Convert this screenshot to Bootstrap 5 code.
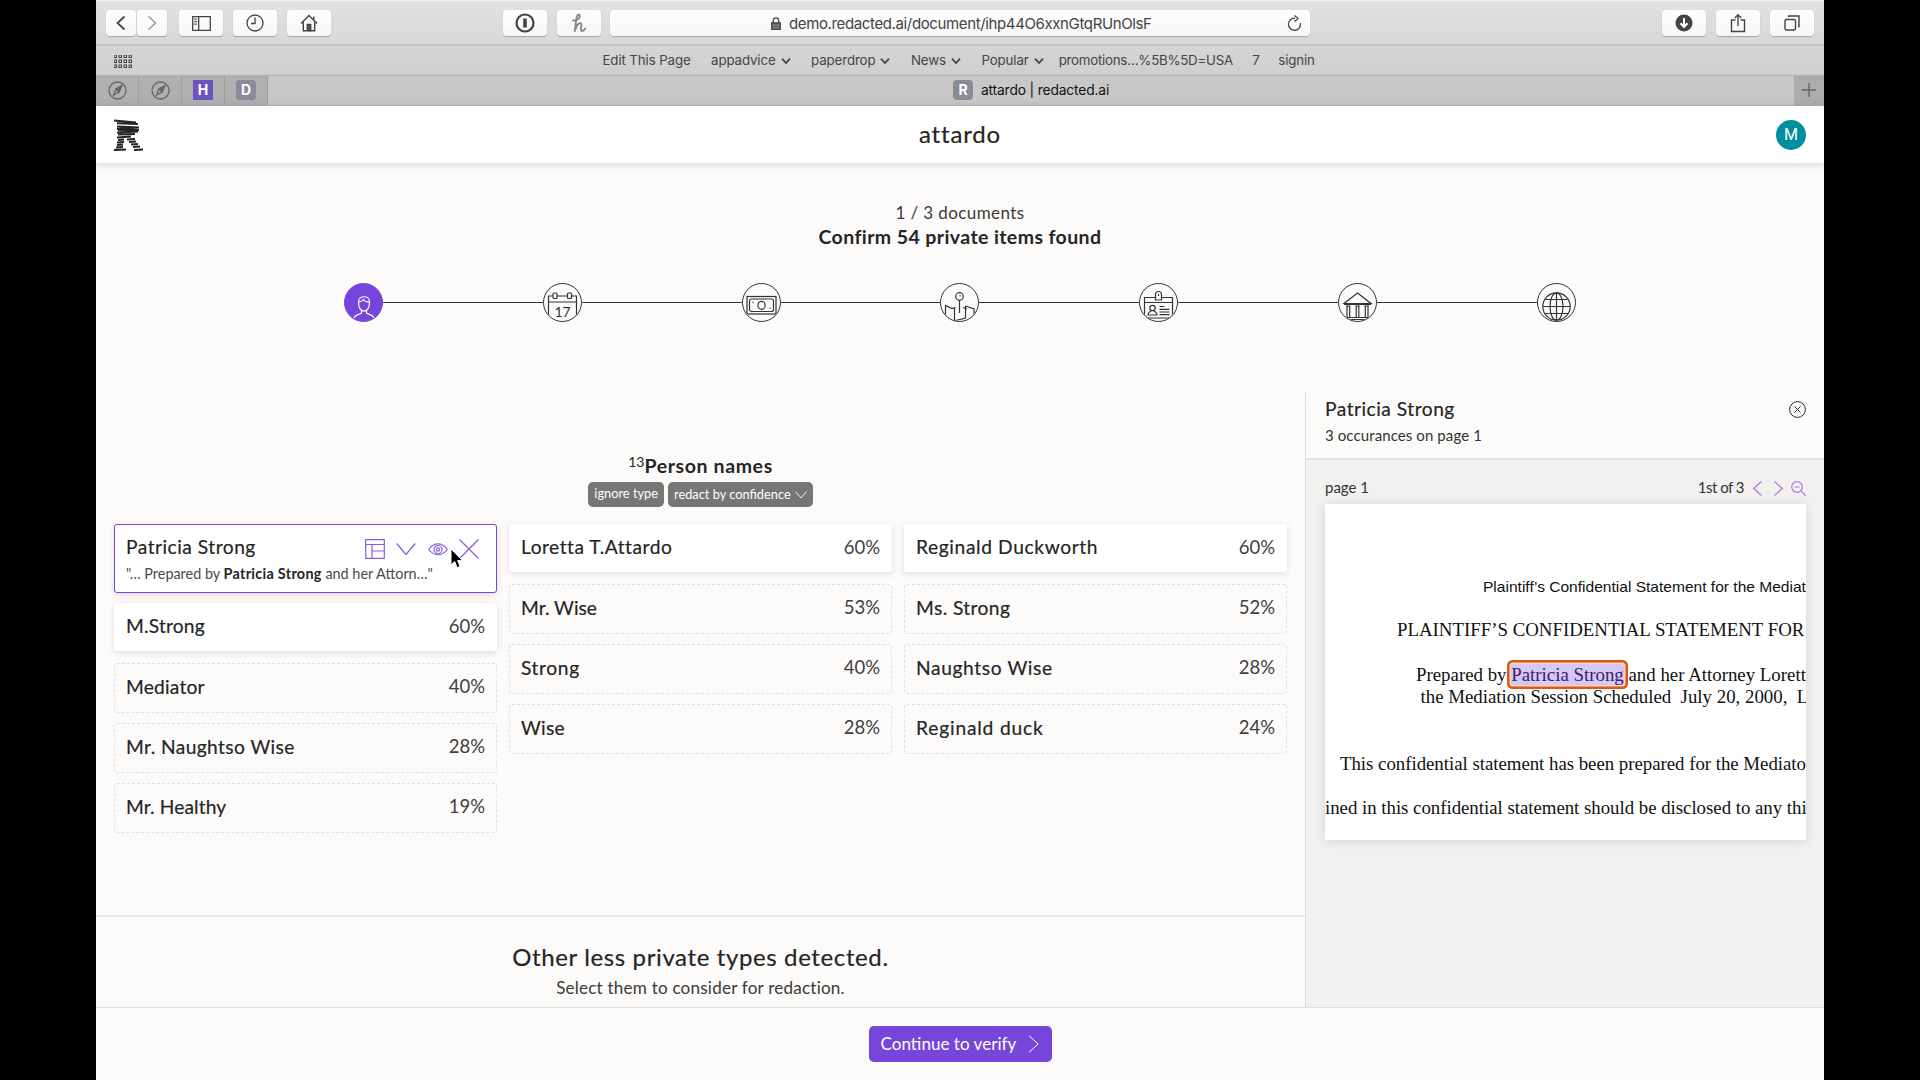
<!DOCTYPE html>
<html lang="en">
<head>
<meta charset="utf-8">
<title>attardo | redacted.ai</title>
<link rel="stylesheet" href="https://cdn.jsdelivr.net/npm/bootstrap@5.3.0/dist/css/bootstrap.min.css">
<style>
body{background:#000;overflow:hidden;font-family:Lato,"Open Sans",sans-serif;color:#252525}
svg{display:block;flex:none;fill:none;stroke:currentColor}
.t{white-space:nowrap;display:inline-block}
.k1{letter-spacing:.1px}.k2{letter-spacing:.2px}.k3{letter-spacing:.3px}.k4{letter-spacing:.4px}.k5{letter-spacing:.5px}.k6{letter-spacing:.62px}.k8{letter-spacing:.82px}
.screen{width:1728px;height:1080px;background:#fcfbf9}
.screen>*{flex:none}
/* browser chrome */
.chrome{font-family:Inter,Roboto,sans-serif;color:#454545}
.toolbar{height:46px;padding:9px 10px 0;background:linear-gradient(#e2e2e2,#d8d8d8);border-bottom:2px solid #c3c3c3;border-top:1px solid #efefef}
.tbtn{width:44px;height:26px;border-radius:4px;background:linear-gradient(#fff,#f6f6f6);box-shadow:0 1px 1px rgba(0,0,0,.25);color:#444;margin-left:10px}
.tbtn.slim{width:30px;margin-left:0}
.tbtn.fwd{margin-left:1px;color:#999}
.tbtn.gap-s{margin-left:12px}
.tbtn.gap-l{margin-left:172px}
.tbtn.pale{color:#888;margin-left:10px}
.urlbar{width:700px;margin-left:9px;padding:1px 8px 0 161px;font-size:15px;line-height:25px;letter-spacing:-.37px}
.favs{height:29.5px;padding-top:2px;background:linear-gradient(#d5d5d5,#cfcfcf);border-bottom:1.5px solid #b0b0b0;font-size:13.3px;letter-spacing:-.12px}
.favlist{margin-left:470.5px;gap:20.5px}
.drop{gap:5px}
.promo{letter-spacing:-.25px;margin:0 -1px 0 -5.5px}
.tabs{height:30.5px;background:#c8c8c8;border-bottom:1px solid #b5b5b5;font-size:13.8px;letter-spacing:-.15px;color:#111}
.pin{width:43px;background:#b0b0b0;border-right:1px solid #9d9d9d;color:#666}
.favicon{width:20px;height:20px;border-radius:4px;background:#8b8a96;color:#fff;font-weight:700;font-size:14px;line-height:20px;text-align:center}
.favicon.sq{border-radius:0;background:#6a55bd}
.newtab{width:30px;background:#acacac;color:#666}
/* app */
.apphead{height:57px;background:#fff;box-shadow:0 1px 8px rgba(0,0,0,.18);padding:0 18px;position:relative}
.apphead .t{font-size:24px;line-height:30px;padding-bottom:1px}
.avatar{width:30px;height:30px;background:#008f9e;color:#fff;font-family:Roboto,sans-serif;font-size:16px;line-height:30px}
.docs{font-size:17px;line-height:24px;color:#3a3a3a}
.confirm{font-size:19.5px;line-height:24px;font-weight:700}
.intro{height:229px;padding-top:38px}
.steps{width:1232px;margin-top:34px}
.step{width:39px;height:39px;border-radius:50%;overflow:hidden;border:1.3px solid #333;color:#333}
.step.on{background:#7645d9;border-color:#7645d9;color:#fff}
.rail{height:1.4px;background:#333}
.lower{height:615px}
.main{width:1210px;flex:none;border-right:1px solid #dcdbda}
.found{height:523px;padding:0 18px}
.ttl{font-size:19.5px;line-height:24px;font-weight:700;padding-top:62px}
.ttl sup{font-size:14px;font-weight:400;top:-.45em;line-height:0}
.pills{gap:4px;margin-top:4px}
.pill{height:25px;border-radius:5px;background:#767675;color:#fff;font-size:12.8px;line-height:23px;padding:0 6px}
.names{gap:12px;margin-top:17px}
.names>div{flex:1 1 0;min-width:0}
.item{padding:0 12px;font-size:19.2px;border-radius:3px}
.item .t,.sidehead .a,.h-other,.apphead .t{-webkit-text-stroke:.2px}
.item .pc{color:#3f3f3f;font-size:18.5px;-webkit-text-stroke:0}
.sure{height:48px;margin-bottom:12px;background:#fff;box-shadow:0 2px 7px rgba(0,0,0,.12);line-height:46px}
.maybe{height:50px;margin-bottom:10px;border:1.5px dashed #e2e1df;padding:0 11px;line-height:45px}
.picked{height:69px;margin-bottom:9.5px;background:#fff;border:1.5px solid #7645d9;box-shadow:0 2px 7px rgba(0,0,0,.12);padding:0 11px}
.picked .top{line-height:44px;height:44px}
.quote{font-size:14.4px;line-height:20px;color:#4a4a4a;margin-top:-5px}
.item .quote .t{-webkit-text-stroke:0}
.quote b{color:#252525;letter-spacing:.3px}
.acts{color:#8560dd;gap:11.5px;padding-right:6px;padding-top:4px}
.pointer{position:absolute;left:450px;top:548px}
.other{border-top:2px solid #e9e8e6;padding-top:25px}
.h-other{font-size:24px;line-height:30px}
.s-other{font-size:17.1px;line-height:24px;color:#3a3a3a;margin-top:4px}
.side{background:#f2f1f0;width:518px;flex:none}
.sidehead{height:68px;background:#fcfbf9;border-bottom:2px solid #e3e2e1;padding:5px 18px 0 19px}
.sidehead .a{font-size:19.2px;line-height:24px}
.sidehead .b{font-size:15px;line-height:20px;color:#333;margin-top:4px}
.closer{margin-top:4px}
.pager{height:44px;padding:13.5px 18px 0 19px;font-size:15px;line-height:26px;color:#333}
.pager svg{color:#9a80e0;margin:7.500px 0 0 9px}
.pager svg+svg{margin-left:12px}
.pager svg.lens{margin-left:8px}
.nth{letter-spacing:-.5px}
.paper{height:336px;margin:0 18px 0 19px;background:#fff;box-shadow:0 1px 10px rgba(0,0,0,.12);overflow:hidden;font-family:"Liberation Serif",serif;font-size:18.85px;color:#111;line-height:22px;padding-top:71.5px}
.paper div{white-space:pre;height:22px}
.paper .l1{font-family:"Liberation Sans",sans-serif;font-size:15.55px;padding-left:158px}
.paper .l2{padding-left:72px;margin-top:21.5px}
.paper .l3{padding-left:91px;margin-top:23px}
.paper .l4{padding-left:95.5px}
.paper .l5{padding-left:15px;margin-top:44.5px;letter-spacing:-.03px}
.paper .l6{margin-top:22.5px;letter-spacing:-.03px}
.hit{background:#d5c7f6;color:#3b2166;border-radius:2px;box-shadow:0 0 0 1.5px #f7dccb,0 0 0 4px #e2560f}
.foot{height:73px;border-top:1.5px solid #e0dfde;padding-top:17.5px}
.cta{width:183px;height:36px;border-radius:5px;background:#7645d9;color:#fff;font-size:17.1px;line-height:34px;padding:0 12px}
</style>
<script src="https://cdn.jsdelivr.net/npm/bootstrap@5.3.0/dist/js/bootstrap.bundle.min.js"></script>
</head>
<body>
<div class="screen mx-auto d-flex flex-column">
 <div class="chrome">
  <div class="toolbar d-flex">
   <div class="tbtn slim d-flex align-items-center justify-content-center"><svg width="10" height="16" viewBox="0 0 10 16" stroke-width="1.8"><path d="M8.5 1.5 1.5 8l7 6.5"/></svg></div>
   <div class="tbtn slim fwd d-flex align-items-center justify-content-center"><svg width="10" height="16" viewBox="0 0 10 16" stroke-width="1.5"><path d="M1.5 1.5 8.5 8l-7 6.5"/></svg></div>
   <div class="tbtn gap-s d-flex align-items-center justify-content-center"><svg width="19" height="15" viewBox="0 0 19 15" stroke-width="1.3"><path d="M.7.7h17.600v13.600H.7zM6.700.7v13.600M2.300 3.200h2.400M2.300 5.700h2.400M2.300 8.200h2.400"/></svg></div>
   <div class="tbtn d-flex align-items-center justify-content-center"><svg width="18" height="18" viewBox="0 0 18 18" stroke-width="1.3"><circle cx="9" cy="9" r="8"/><path d="M9 3.500V9.500H5"/></svg></div>
   <div class="tbtn d-flex align-items-center justify-content-center"><svg width="18" height="18" viewBox="0 0 18 18" stroke-width="1.4"><path d="M1 9.500 9 1.500l8 8M3.300 8v8.800h11.400V8M13.800 6V2.500"/><path d="M7.300 16.500v-6h3.400v6z" fill="#555"/></svg></div>
   <div class="tbtn gap-l d-flex align-items-center justify-content-center"><svg width="20" height="20" viewBox="0 0 20 20" stroke-width="2.2"><circle cx="10" cy="10" r="8.500"/><path d="M10 5.500v9" stroke-width="3.600"/></svg></div>
   <div class="tbtn pale d-flex align-items-center justify-content-center"><svg width="16" height="20" viewBox="0 0 16 20" stroke-width="1.9" stroke-linecap="round" stroke-linejoin="round"><path d="M2 7.500C7 8 9.500 4.500 8.500 2.200 7.500.300 5.600 2.500 5.300 6L3.800 18C5 13 7.500 9.800 9.500 10.200c2.500.800-.600 6.300.800 7.600 1.400.800 3-.800 4-2.300"/></svg></div>
   <div class="tbtn urlbar d-flex align-items-center"><svg width="10" height="13" viewBox="0 0 10 13" class="me-1" stroke="#777" stroke-width="1.3"><path d="M2.300 6V3.500a2.700 2.700 0 0 1 5.400 0V6"/><path d="M.7 6h8.600v6.300H.7z" fill="#777"/></svg><span class="t ps-1">demo.redacted.ai/document/ihp44O6xxnGtqRUnOlsF</span><svg class="ms-auto" width="15" height="17" viewBox="0 0 15 17" stroke="#666" stroke-width="1.3"><path d="M8 3.300A6 6 0 1 0 13.300 8M7.500.500l3.500 3-3.500 3"/></svg></div>
   <div class="tbtn ms-auto d-flex align-items-center justify-content-center"><svg width="18" height="18" viewBox="0 0 18 18"><circle cx="9" cy="9" r="8.500" fill="#444" stroke="none"/><path d="M9 4v8.500M5.500 9.300 9 13l3.500-3.700" stroke="#fff" stroke-width="2"/></svg></div>
   <div class="tbtn d-flex align-items-center justify-content-center"><svg width="16" height="20" viewBox="0 0 16 20" stroke-width="1.4"><path d="M5.500 7H1.500v11.500h13V7h-4M8 13V2M4.800 5 8 1.700 11.200 5"/></svg></div>
   <div class="tbtn d-flex align-items-center justify-content-center"><svg width="16" height="16" viewBox="0 0 16 16" stroke-width="1.4"><rect x="1" y="4.500" width="10.500" height="10.500" rx="1.5"/><path d="M4.500 2V1h10.500v10.500h-1"/></svg></div>
  </div>
  <div class="favs d-flex align-items-center">
   <svg class="ms-3 me-0" style="padding-left:2px" width="20" height="13" viewBox="0 0 18 13" stroke="none" fill="#444"><g id="r"><rect width="2.500" height="2.500"/><rect x="5" width="2.500" height="2.500"/><rect x="10" width="2.500" height="2.500"/><rect x="15" width="2.500" height="2.500"/></g><use href="#r" y="5"/><use href="#r" y="10"/></svg>
   <div class="d-flex align-items-center favlist">
    <span class="t">Edit This Page</span>
    <span class="drop d-flex align-items-center"><span class="t">appadvice</span><svg width="10" height="6" viewBox="0 0 10 6" stroke-width="1.8"><path d="M1 .7 5 5l4-4.300"/></svg></span>
    <span class="drop d-flex align-items-center"><span class="t">paperdrop</span><svg width="10" height="6" viewBox="0 0 10 6" stroke-width="1.8"><path d="M1 .7 5 5l4-4.300"/></svg></span>
    <span class="drop d-flex align-items-center"><span class="t">News</span><svg width="10" height="6" viewBox="0 0 10 6" stroke-width="1.8"><path d="M1 .7 5 5l4-4.300"/></svg></span>
    <span class="drop d-flex align-items-center"><span class="t">Popular</span><svg width="10" height="6" viewBox="0 0 10 6" stroke-width="1.8"><path d="M1 .7 5 5l4-4.300"/></svg></span>
    <span class="t promo">promotions…%5B%5D=USA</span>
    <span class="t">7</span>
    <span class="t" style="margin-left:-2px">signin</span>
   </div>
  </div>
  <div class="tabs d-flex">
   <div class="pin d-flex align-items-center justify-content-center"><svg width="19" height="19" viewBox="0 0 19 19" stroke-width="1.3"><circle cx="9.500" cy="9.500" r="8.500"/><path d="M13.500 5 11 11l-5.500 3L8 8z"/><path d="M13.500 5 11 11 8 8z" fill="#666"/></svg></div>
   <div class="pin d-flex align-items-center justify-content-center"><svg width="19" height="19" viewBox="0 0 19 19" stroke-width="1.3"><circle cx="9.500" cy="9.500" r="8.500"/><path d="M13.500 5 11 11l-5.500 3L8 8z"/><path d="M13.500 5 11 11 8 8z" fill="#666"/></svg></div>
   <div class="pin d-flex align-items-center justify-content-center"><span class="favicon sq">H</span></div>
   <div class="pin d-flex align-items-center justify-content-center"><span class="favicon">D</span></div>
   <div class="flex-fill d-flex align-items-center justify-content-center"><span class="favicon me-2">R</span><span class="t">attardo | redacted.ai</span></div>
   <div class="newtab d-flex align-items-center justify-content-center"><svg width="14" height="14" viewBox="0 0 14 14" stroke-width="1.4"><path d="M7 0v14M0 7h14"/></svg></div>
  </div>
 </div>
 <header class="apphead d-flex align-items-center justify-content-between">
  <svg width="30" height="32" viewBox="0 0 30 32" stroke="#000" stroke-width="2.1"><path d="M0 1.500 22 3.500M3 4.300 24 5M3 7.500 25 8.500M3 10 25 8.500M4 11 25 11M3 13.500 24 12.500M4 15.500 21 15M3 18.500 17 17.500M4 21 10 20.500M3 23.500 10 23M3 26 9 25.500M2 28.500 9 28M0 31 12 30.500M13 20.500 21 20M15 23 22 22.500M17 25.500 24 25M19 28 26 27.500M20 31 29 30.500"/></svg>
  <span class="t k8">attardo</span>
  <span class="avatar rounded-circle text-center">M</span>
 </header>
 <section class="intro text-center">
  <div class="docs"><span class="t k4">1 / 3 documents</span></div>
  <div class="confirm"><span class="t k4">Confirm 54 private items found</span></div>
  <div class="steps mx-auto d-flex align-items-center">
   <div class="step on"><svg width="37" height="37" viewBox="0 0 37 37" stroke-width="1.2"><path d="M13.500 18c0-7 11-7 11 0 0 6-2.500 9-5.500 9s-5.500-3-5.500-9zM13.500 18c3 0 4-1 5-2.500 1 2 3 2.500 5.500 2.500M16.500 26.500v2.500c-2 2-6 1-7.500 5M21.500 26.500v2.500c2 2 6 1 7.500 5"/></svg></div><div class="rail flex-fill"></div>
   <div class="step"><svg width="37" height="37" viewBox="0 0 37 37" stroke-width="1.2"><path d="M9 12H4.500v25M13 12h10.500M28 12h4.500v25M4.500 18h28M4.500 32l3 4M32.500 32l-3 4"/><rect x="9" y="9" width="4" height="5.500" rx="1"/><rect x="23.500" y="9" width="4" height="5.500" rx="1"/><text x="18.500" y="32.500" text-anchor="middle" font-size="14" fill="#333" stroke="none" font-family="Lato">17</text></svg></div><div class="rail flex-fill"></div>
   <div class="step"><svg width="37" height="37" viewBox="0 0 37 37" stroke-width="1.2"><rect x="4" y="12.500" width="29" height="17.500"/><rect x="6.500" y="15" width="24" height="12.500" rx="2"/><ellipse cx="18.500" cy="21.300" rx="3.600" ry="4"/><path d="M9.500 18.500h1M26.500 24h1" stroke-width="1.600"/></svg></div><div class="rail flex-fill"></div>
   <div class="step"><svg width="37" height="37" viewBox="0 0 37 37" stroke-width="1.2"><circle cx="18.500" cy="12.500" r="3.800"/><path d="M18.500 16.300V29M18.500 11.500l1.200.5M14.500 23.500 11 24.500 4.500 21.500v12l8 3.500M13.500 24v12M22 23.500l4 1.500M24.500 22l8.500 3v10M24.500 22v12l-12 3"/></svg></div><div class="rail flex-fill"></div>
   <div class="step"><svg width="37" height="37" viewBox="0 0 37 37" stroke-width="1.2"><path d="M15.500 13.500H4.500V37M21.500 13.500h11V37M4.500 18.500h28M4 34h29"/><path d="M15.500 16v-5.500c0-4 6-4 6 0V16zM18.500 10v2"/><circle cx="12.500" cy="24" r="2.700"/><path d="M8 31c0-3.500 2.500-3 3.500-4.500h2c1 1.500 3.500 1 3.500 4.500zM19.500 22.500h5M19.500 25.300h10M19.500 28h10M19.500 30.700h10"/></svg></div><div class="rail flex-fill"></div>
   <div class="step"><svg width="37" height="37" viewBox="0 0 37 37" stroke-width="1.2"><path d="M18.500 9 32 19.500H5zM5 20.500h27M7 22h4.500M16.200 22h4.500M25.500 22H30M8 22v11M10.700 22v11M17.200 22v11M19.800 22v11M26.300 22v11M29 22v11M6 33.500h25M8 35.500h21"/></svg></div><div class="rail flex-fill"></div>
   <div class="step"><svg width="37" height="37" viewBox="0 0 37 37" stroke-width="1.2"><circle cx="18.500" cy="22.500" r="13.700"/><ellipse cx="18.500" cy="22.500" rx="6.500" ry="13.700"/><path d="M18.500 9v27M7.500 15.500h22M5 22.500h27M7 29.500h23"/></svg></div>
  </div>
 </section>
 <div class="lower d-flex">
  <main class="main">
   <div class="found">
    <div class="ttl text-center"><sup>13</sup><span class="t k6">Person names</span></div>
    <div class="pills d-flex justify-content-center">
     <span class="pill"><span class="t">ignore type</span></span>
     <span class="pill d-flex align-items-center"><span class="t">redact by confidence</span><svg class="ms-1" width="12" height="8" viewBox="0 0 12 8" stroke-width=".9"><path d="M.5.5 6 7 11.500.5"/></svg></span>
    </div>
    <div class="names d-flex">
     <div>
      <div class="picked item">
       <div class="top d-flex align-items-center justify-content-between"><span class="t k5">Patricia Strong</span>
        <div class="acts d-flex align-items-center"><svg width="20" height="20" viewBox="0 0 20 20" stroke-width="1.2"><path d="M.7.7h18.600v18.600H.7zM.7 5.500h18.600M7 5.500v13.800M7 12h12.300"/></svg><svg width="20" height="20" viewBox="0 0 20 20" stroke-width="1.2"><path d="m.7 4.500 9.300 11 9.300-11"/></svg><svg width="20" height="20" viewBox="0 0 20 20" stroke-width="1.2"><path d="M.7 10.500C6 3 14 3 19.300 10.500 14 17.500 6 17.500.7 10.500z"/><circle cx="10" cy="10.500" r="4"/><circle cx="10" cy="10.500" r="1.600"/></svg><svg width="20" height="20" viewBox="0 0 20 20" stroke-width="1.2"><path d="m.5.5 19 19M19.500.5l-19 19"/></svg></div></div>
       <div class="quote"><span class="t">"… Prepared by <b>Patricia Strong</b> and her Attorn…"</span></div>
      </div>
      <div class="sure item d-flex justify-content-between"><span class="t k2">M.Strong</span><span class="pc t">60%</span></div>
      <div class="maybe item d-flex justify-content-between"><span class="t k2">Mediator</span><span class="pc t">40%</span></div>
      <div class="maybe item d-flex justify-content-between"><span class="t k4">Mr. Naughtso Wise</span><span class="pc t">28%</span></div>
      <div class="maybe item d-flex justify-content-between"><span class="t k1">Mr. Healthy</span><span class="pc t">19%</span></div>
     </div>
     <div>
      <div class="sure item d-flex justify-content-between"><span class="t k5">Loretta T.Attardo</span><span class="pc t">60%</span></div>
      <div class="maybe item d-flex justify-content-between"><span class="t">Mr. Wise</span><span class="pc t">53%</span></div>
      <div class="maybe item d-flex justify-content-between"><span class="t k6">Strong</span><span class="pc t">40%</span></div>
      <div class="maybe item d-flex justify-content-between"><span class="t k3">Wise</span><span class="pc t">28%</span></div>
     </div>
     <div>
      <div class="sure item d-flex justify-content-between"><span class="t k6">Reginald Duckworth</span><span class="pc t">60%</span></div>
      <div class="maybe item d-flex justify-content-between"><span class="t k4">Ms. Strong</span><span class="pc t">52%</span></div>
      <div class="maybe item d-flex justify-content-between"><span class="t k6">Naughtso Wise</span><span class="pc t">28%</span></div>
      <div class="maybe item d-flex justify-content-between"><span class="t k8">Reginald duck</span><span class="pc t">24%</span></div>
     </div>
    </div>
   </div>
   <div class="other text-center">
    <div class="h-other"><span class="t k6">Other less private types detected.</span></div>
    <div class="s-other"><span class="t k2">Select them to consider for redaction.</span></div>
   </div>
  </main>
  <aside class="side">
   <div class="sidehead d-flex justify-content-between">
    <div><div class="a"><span class="t k5">Patricia Strong</span></div><div class="b"><span class="t k1">3 occurances on page 1</span></div></div>
    <svg class="closer" width="17" height="17" viewBox="0 0 17 17" stroke="#555" stroke-width="1"><circle cx="8.500" cy="8.500" r="7.900"/><path d="m5.500 5.500 6 6M11.500 5.500l-6 6"/></svg>
   </div>
   <div class="pager d-flex"><span class="t">page 1</span><span class="t nth ms-auto">1st of 3</span>
    <svg width="9" height="15" viewBox="0 0 9 15" stroke-width="1.2"><path d="M8.500.5.700 7.500l7.800 7"/></svg><svg width="9" height="15" viewBox="0 0 9 15" stroke-width="1.2"><path d="m.5.5 7.800 7-7.800 7"/></svg><svg class="lens" width="15" height="15" viewBox="0 0 15 15" stroke-width="1.2"><circle cx="6" cy="6" r="5.300"/><path d="m10 10 4.700 4.700M3.500 6h5"/></svg></div>
   <div class="paper"><div class="l1">Plaintiff’s Confidential Statement for the Mediat</div><div class="l2">PLAINTIFF’S CONFIDENTIAL STATEMENT FOR</div><div class="l3">Prepared by <span class="hit">Patricia Strong</span> and her Attorney Loretta</div><div class="l4">the Mediation Session Scheduled  July 20, 2000,  L</div><div class="l5">This confidential statement has been prepared for the Mediato</div><div class="l6">ined in this confidential statement should be disclosed to any thi</div></div>
  </aside>
 </div>
 <footer class="foot d-flex justify-content-center"><div class="cta d-flex align-items-center justify-content-between"><span class="t">Continue to verify</span><svg width="12" height="18" viewBox="0 0 12 18" stroke-width="1"><path d="m1 .7 9 8.300-9 8.300"/></svg></div></footer>
</div>
<svg class="pointer" width="14" height="22" viewBox="0 0 14 22"><path d="M1 1v16l3.700-3.400 2.500 6.100 2.900-1.200-2.500-5.900h5z" fill="#000" stroke="#fff" stroke-width="1"/></svg>
</body>
</html>
